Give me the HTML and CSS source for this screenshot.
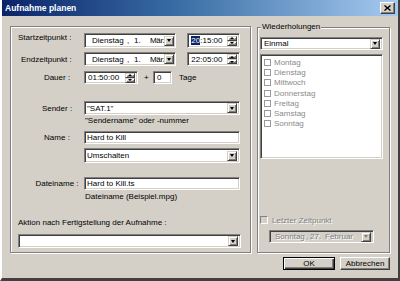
FILE: index.html
```html
<html>

<head>
    <meta charset="UTF-8">
    <link rel="stylesheet" href="styles.css">
</head>

<body>
    <div class="window">
        <div class="titlebar">
            <span class="title">Aufnahme planen</span>
            <span class="close">
                <svg width="7" height="6" viewBox="0 0 7 6"><path d="M0.5 0.5 L6.5 5.5 M6.5 0.5 L0.5 5.5" stroke="#000" stroke-width="1.4"/></svg>
            </span>
        </div>
        <div class="client">
            <div class="main">
                <div class="group left">
                    <div class="row r-start">
                        <span class="lbl lbl-start">Startzeitpunkt :</span>
                        <div class="field combo date">
                            <span class="d-day">Dienstag</span><span class="d-sep">,</span><span class="d-num">1.</span><span class="d-mon">März</span>
                            <span class="drop"><i class="tri"></i></span>
                        </div>
                        <div class="field time">
                            <span class="txt"><span class="sel">20</span>:15:00</span>
                            <span class="spin"><span class="up"><i class="tri-up"></i></span><span class="dn"><i class="tri"></i></span></span>
                        </div>
                    </div>
                    <div class="row r-end">
                        <span class="lbl lbl-end">Endzeitpunkt :</span>
                        <div class="field combo date">
                            <span class="d-day">Dienstag</span><span class="d-sep">,</span><span class="d-num">1.</span><span class="d-mon">März</span>
                            <span class="drop"><i class="tri"></i></span>
                        </div>
                        <div class="field time">
                            <span class="txt">22:05:00</span>
                            <span class="spin"><span class="up"><i class="tri-up"></i></span><span class="dn"><i class="tri"></i></span></span>
                        </div>
                    </div>
                    <div class="row r-dauer">
                        <span class="lbl lbl-c">Dauer :</span>
                        <div class="field dauer">
                            <span class="txt">01:50:00</span>
                            <span class="spin"><span class="up"><i class="tri-up"></i></span><span class="dn"><i class="tri"></i></span></span>
                        </div>
                        <span class="plus">+</span>
                        <div class="field days">0</div>
                        <span class="tage">Tage</span>
                    </div>
                    <div class="row r-sender">
                        <span class="lbl lbl-c">Sender :</span>
                        <div class="field combo wide">
                            <span class="txt">"SAT.1"</span>
                            <span class="drop"><i class="tri"></i></span>
                        </div>
                    </div>
                    <div class="hint hint-sender">"Sendername" oder -nummer</div>
                    <div class="row r-name">
                        <span class="lbl lbl-c">Name :</span>
                        <div class="field wide"><span class="txt">Hard to Kill</span></div>
                    </div>
                    <div class="row r-mode">
                        <span class="lbl"></span>
                        <div class="field combo wide">
                            <span class="txt">Umschalten</span>
                            <span class="drop"><i class="tri"></i></span>
                        </div>
                    </div>
                    <div class="row r-file">
                        <span class="lbl lbl-c">Dateiname :</span>
                        <div class="field wide"><span class="txt">Hard to Kill.ts</span></div>
                    </div>
                    <div class="hint hint-file">Dateiname (Beispiel.mpg)</div>
                    <div class="aktion-lbl">Aktion nach Fertigstellung der Aufnahme :</div>
                    <div class="field combo aktion">
                        <span class="txt"></span>
                        <span class="drop"><i class="tri"></i></span>
                    </div>
                </div>

                <fieldset class="group right">
                    <legend>Wiederholungen</legend>
                    <div class="field combo repeat">
                        <span class="txt">Einmal</span>
                        <span class="drop"><i class="tri"></i></span>
                    </div>
                    <div class="field list">
                        <div class="item"><span class="box"></span>Montag</div>
                        <div class="item"><span class="box"></span>Dienstag</div>
                        <div class="item"><span class="box"></span>Mittwoch</div>
                        <div class="item"><span class="box"></span>Donnerstag</div>
                        <div class="item"><span class="box"></span>Freitag</div>
                        <div class="item"><span class="box"></span>Samstag</div>
                        <div class="item"><span class="box"></span>Sonntag</div>
                    </div>
                    <div class="last">
                        <span class="box dis"></span><span class="dis-txt">Letzter Zeitpunkt</span>
                    </div>
                    <div class="field combo last-date">
                        <span class="dis-txt l-day">Sonntag</span><span class="dis-txt l-sep">,</span><span class="dis-txt l-num">27.</span><span class="dis-txt l-mon">Februar</span>
                        <span class="drop"><i class="tri off"></i></span>
                    </div>
                </fieldset>
            </div>
            <div class="buttons">
                <button class="btn default">OK</button>
                <button class="btn">Abbrechen</button>
            </div>
        </div>
    </div>
</body>

</html>
```

FILE: styles.css
```css
* {
    box-sizing: border-box;
    margin: 0;
    padding: 0;
}

body {
    background-color: #d4d0c8;
    font-family: "Liberation Sans", Arial, sans-serif;
    font-size: 8px;
    color: #000;
}

.window {
    width: 400px;
    height: 281px;
    display: flex;
    flex-direction: column;
    border-left: 2px solid #ffffff;
    border-right: 2px solid #404040;
    border-bottom: 3px solid #404040;
}

.titlebar {
    height: 16px;
    display: flex;
    align-items: center;
    padding: 0 3px 0 3px;
    background: linear-gradient(to right, #0a246a, #3a6ea5 45%, #a6caf0);
}

.title {
    color: #fff;
    font-weight: bold;
    font-size: 8.5px;
}

.close {
    margin-left: auto;
    width: 15px;
    height: 12px;
    display: flex;
    align-items: center;
    justify-content: center;
    background-color: #d4d0c8;
    border: 1px solid;
    border-color: #fff #404040 #404040 #fff;
    box-shadow: inset -1px -1px #808080;
}

.client {
    flex: 1;
    padding: 10px 8px 0 8px;
    display: flex;
    flex-direction: column;
}

.main {
    height: 227px;
    display: flex;
    gap: 6px;
}

.group {
    border: 1px solid #808080;
    box-shadow: inset 1px 1px #fff, 1px 1px #fff;
}

.left {
    width: 241px;
    padding: 0 10px 0 7px;
    display: flex;
    flex-direction: column;
}

.row {
    display: flex;
    align-items: center;
}

.lbl {
    width: 66px;
    flex: none;
    white-space: nowrap;
}

.lbl-end {
    padding-left: 3px;
}

.lbl-c {
    text-align: center;
    padding-left: 12px;
}

/* sunken edit box */
.field {
    height: 14px;
    display: flex;
    align-items: center;
    background-color: #fff;
    border: 1px solid;
    border-color: #808080 #fff #fff #808080;
    box-shadow: inset 1px 1px #404040, inset -1px -1px #d4d0c8;
    padding: 2px 2px 2px 2px;
    white-space: nowrap;
    overflow: hidden;
}

.field .txt {
    flex: 1;
    overflow: hidden;
}

.drop,
.spin span {
    flex: none;
    display: flex;
    align-items: center;
    justify-content: center;
    background-color: #d4d0c8;
    border: 1px solid;
    border-color: #d4d0c8 #404040 #404040 #d4d0c8;
    box-shadow: inset 1px 1px #fff, inset -1px -1px #808080;
}

.drop {
    width: 10px;
    height: 10px;
    margin-left: auto;
}

.tri {
    width: 0;
    height: 0;
    border-left: 2.5px solid transparent;
    border-right: 2.5px solid transparent;
    border-top: 3px solid #000;
}

.tri.off {
    border-top-color: #808080;
}

.tri-up {
    width: 0;
    height: 0;
    border-left: 2px solid transparent;
    border-right: 2px solid transparent;
    border-bottom: 2px solid #000;
}

.spin {
    display: flex;
    flex-direction: column;
    width: 10px;
    height: 10px;
}

.spin span {
    height: 5px;
}

.spin .tri {
    border-left-width: 2px;
    border-right-width: 2px;
    border-top-width: 2px;
}

.r-start {
    margin-top: 6px;
}

.r-start .field,
.r-start .lbl {
    height: 15px;
}

.date {
    width: 93px;
    padding-left: 7px;
    padding-right: 1px;
}

.d-day {
    width: 35px;
    flex: none;
}

.d-sep {
    width: 7px;
    flex: none;
}

.d-num {
    width: 16px;
    flex: none;
}

.d-mon {
    flex: 1;
    overflow: hidden;
    letter-spacing: -0.3px;
}

.time {
    width: 53px;
    margin-left: 11px;
    padding-left: 3px;
}

.sel {
    background-color: #0a246a;
    color: #fff;
}

.r-end {
    margin-top: 4px;
}

.r-dauer {
    margin-top: 5px;
}

.r-dauer .field {
    height: 13px;
}

.dauer {
    width: 54px;
    padding-left: 3px;
}

.plus {
    margin-left: 6px;
    width: 7px;
}

.days {
    width: 19px;
    margin-left: 2px;
    padding-left: 3px;
}

.tage {
    margin-left: 7px;
}

.r-sender {
    margin-top: 17px;
}

.wide {
    width: 156px;
}

.hint {
    height: 10px;
    line-height: 10px;
    padding-left: 67px;
}

.hint-sender {
    margin-top: 1px;
}

.r-name {
    margin-top: 5px;
}

.r-name .field,
.r-file .field {
    height: 13px;
}

.r-mode {
    margin-top: 4px;
}

.r-mode .field {
    height: 15px;
}

.r-file {
    margin-top: 14px;
}

.hint-file {
    margin-top: 2px;
}

.aktion-lbl {
    margin-top: 16px;
    height: 10px;
    line-height: 10px;
}

.aktion {
    margin-top: 6px;
    width: 223px;
}

/* right side */
.right {
    flex: 1;
    min-width: 0;
    margin-top: -4px;
    padding: 0 6px 9px 2px;
    display: flex;
    flex-direction: column;
}

.right legend {
    margin-left: 1px;
    padding: 0 1px;
    line-height: 10px;
    height: 10px;
    background-color: #d4d0c8;
}

.repeat {
    margin-top: 5px;
    height: 13px;
    padding-left: 3px;
}

.list {
    margin-top: 4px;
    height: 105px;
    display: block;
    padding: 2px 2px 2px 3px;
}

.item {
    height: 10.3px;
    display: flex;
    align-items: center;
    color: #8a8a8a;
}

.box {
    width: 7px;
    height: 7px;
    flex: none;
    margin-right: 3px;
    background-color: #fff;
    border: 1px solid #9a9a9a;
}

.last {
    margin-top: auto;
    height: 10px;
    display: flex;
    align-items: center;
}

.box.dis {
    width: 8px;
    height: 8px;
    border-color: #808080 #fff #fff #808080;
    background-color: #d4d0c8;
    margin-right: 4px;
}

.dis-txt {
    color: #808080;
    text-shadow: 1px 1px #fff;
}

.last-date {
    margin-top: 5px;
    margin-left: 9px;
    width: 105px;
    height: 13px;
    background-color: #d4d0c8;
    padding-left: 5px;
}

.l-day {
    width: 31px;
    flex: none;
}

.l-sep {
    width: 4px;
    flex: none;
}

.l-num {
    width: 15px;
    flex: none;
}

.buttons {
    margin-top: 4px;
    display: flex;
    justify-content: flex-end;
    gap: 5px;
}

.btn {
    height: 13px;
    width: 50px;
    font-family: inherit;
    font-size: 8px;
    background-color: #d4d0c8;
    border: 1px solid;
    border-color: #fff #404040 #404040 #fff;
    box-shadow: inset -1px -1px #808080;
}

.btn.default {
    width: 52px;
    border-color: #000;
    box-shadow: inset 1px 1px #fff, inset -1px -1px #404040, inset -2px -2px #808080;
}
```
